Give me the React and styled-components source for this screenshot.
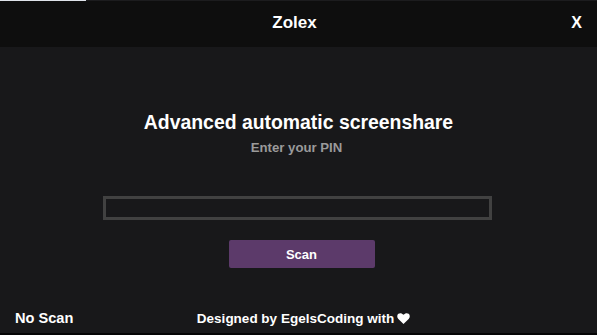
import React, { useState } from "react"
import styled, { createGlobalStyle } from "styled-components"

const GlobalStyle = createGlobalStyle`
  html, body {
    margin: 0;
    padding: 0;
    height: 100%;
    background: #18181a;
    font-family: "Liberation Sans", Arial, sans-serif;
    overflow: hidden;
  }
  #root {
    height: 100%;
  }
`

const Window = styled.div`
  display: flex;
  flex-direction: column;
  height: 100vh;
  background: #18181a;
  border-bottom: 2px solid #050505;
  box-sizing: border-box;
`

const Progress = styled.div`
  height: 1px;
  background: #1c1c1e;
`

const ProgressFill = styled.div`
  height: 100%;
  background: #dfe3ea;
`

const Header = styled.header`
  display: grid;
  grid-template-columns: 1fr auto 1fr;
  align-items: center;
  height: 46px;
  padding-bottom: 2px;
  box-sizing: border-box;
  background: #0e0e0e;
  color: #fff;
`

const Title = styled.div`
  grid-column: 2;
  margin-right: 8px;
  font-size: 17px;
  font-weight: bold;
`

const CloseButton = styled.button`
  justify-self: end;
  margin-right: 15px;
  background: none;
  border: none;
  padding: 0;
  color: #fff;
  font-family: inherit;
  font-size: 16px;
  font-weight: bold;
  cursor: pointer;
`

const Main = styled.main`
  flex: 1;
  display: flex;
  flex-direction: column;
  align-items: center;
  padding-top: 64px;
`

const Heading = styled.h1`
  margin: 0;
  color: #fff;
  font-size: 19.4px;
  font-weight: bold;
`

const Subheading = styled.p`
  margin: 6px 4px 0 0;
  color: #9a9a9a;
  font-size: 13.2px;
  font-weight: bold;
`

const PinInput = styled.input`
  margin: 41px 3px 0 0;
  width: 389px;
  height: 24px;
  box-sizing: border-box;
  background: #18181a;
  border: 3px solid #414141;
  color: #fff;
  outline: none;
`

const ScanButton = styled.button`
  margin: 20px 0 0 6px;
  width: 146px;
  height: 28px;
  background: #5c3a6a;
  border: none;
  border-radius: 2px;
  color: #fff;
  font-family: inherit;
  font-size: 13px;
  font-weight: bold;
  cursor: pointer;
`

const Footer = styled.footer`
  display: grid;
  grid-template-columns: 1fr auto 1fr;
  align-items: center;
  padding: 0 15px 7px;
  color: #fff;
  font-weight: bold;
`

const Status = styled.span`
  font-size: 14.6px;
`

const Credit = styled.span`
  grid-column: 2;
  display: flex;
  align-items: center;
  gap: 3px;
  margin-left: 10px;
  font-size: 13.5px;
`

const Heart = () => (
  <svg width="13" height="11" viewBox="0 0 24 21" aria-hidden="true">
    <path
      fill="#fff"
      d="M12 21 L2.2 11.3 C-0.7 8.4 -0.7 3.7 2.2 1.6 C4.9 -0.4 8.9 -0.1 12 3.4 C15.1 -0.1 19.1 -0.4 21.8 1.6 C24.7 3.7 24.7 8.4 21.8 11.3 Z"
    />
  </svg>
)

const App = () => {
  const [pin, setPin] = useState("")

  return (
    <>
      <GlobalStyle />
      <Window>
        <Progress>
          <ProgressFill style={{ width: "86px" }} />
        </Progress>
        <Header>
          <Title>Zolex</Title>
          <CloseButton>X</CloseButton>
        </Header>
        <Main>
          <Heading>Advanced automatic screenshare</Heading>
          <Subheading>Enter your PIN</Subheading>
          <PinInput value={pin} onChange={(e) => setPin(e.target.value)} />
          <ScanButton>Scan</ScanButton>
        </Main>
        <Footer>
          <Status>No Scan</Status>
          <Credit>
            Designed by EgelsCoding with <Heart />
          </Credit>
        </Footer>
      </Window>
    </>
  )
}

export default App
